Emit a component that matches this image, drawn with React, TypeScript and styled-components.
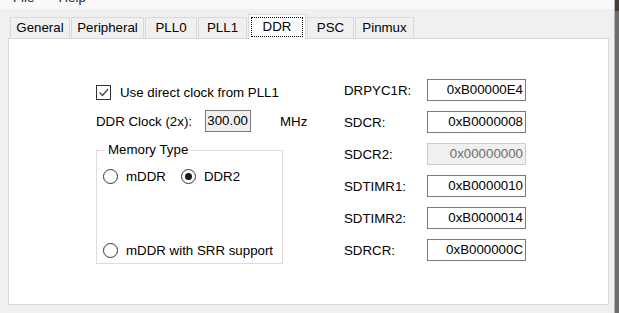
import styled, { createGlobalStyle } from 'styled-components';

const GlobalStyle = createGlobalStyle`
  html, body {
    margin: 0;
    padding: 0;
    background: #f0f0f0;
  }
  body {
    font-family: 'Liberation Sans', Arial, sans-serif;
    font-size: 13.3px;
    color: #000;
  }
`;

const Window = styled.div`
  display: flex;
  width: 619px;
  height: 313px;
  overflow: hidden;
  background: #f0f0f0;
`;

const Main = styled.div`
  width: 614px;
  display: flex;
  flex-direction: column;
`;

const Edge = styled.div`
  width: 5px;
  border-left: 1px solid #b4b4b4;
  box-sizing: border-box;
  background: linear-gradient(#4b3d33 0, #4b3d33 11px, #6f6c6a 11px, #6f6c6a 100%);
`;

const MenuBar = styled.div`
  height: 9px;
  background: #f9f9f9;
  overflow: hidden;
  display: flex;
  gap: 24px;
  padding-left: 13px;
`;

const MenuItem = styled.span`
  display: block;
  margin-top: -10px;
  line-height: 16px;
  color: #2a2233;
`;

const TabStrip = styled.div`
  display: flex;
  align-items: flex-start;
  gap: 1px;
  height: 24px;
  margin-top: 5px;
  padding-left: 10px;
`;

const Tab = styled.div<{ $active?: boolean; $w: number }>`
  box-sizing: border-box;
  width: ${(p) => p.$w}px;
  height: ${(p) => (p.$active ? 25 : 21)}px;
  margin-top: ${(p) => (p.$active ? 0 : 3)}px;
  border: 1px solid #d9d9d9;
  border-bottom: none;
  background: ${(p) => (p.$active ? '#ffffff' : '#f0f0f0')};
  position: relative;
  z-index: ${(p) => (p.$active ? 1 : 0)};
  padding-top: 2px;
  text-align: center;
  line-height: 16px;
  white-space: nowrap;
`;

const FocusBox = styled.span`
  display: block;
  box-sizing: border-box;
  height: 20px;
  margin: 0 2px;
  border: 1px dotted #000;
  line-height: 17px;
`;

const Panel = styled.div`
  box-sizing: border-box;
  width: 601px;
  height: 267px;
  margin-left: 8px;
  border: 1px solid #d9d9d9;
  background: #ffffff;
  padding: 40px 0 0 87px;
  display: flex;
`;

const LeftColumn = styled.div`
  width: 187px;
  flex-shrink: 0;
  margin-right: 61px;
  padding-top: 2px;
  display: flex;
  flex-direction: column;
`;

const Row = styled.div<{ $gap?: number }>`
  display: flex;
  align-items: center;
  height: 22px;
  gap: ${(p) => p.$gap ?? 0}px;
  white-space: nowrap;
`;

const ClockRow = styled(Row)`
  margin-top: 7px;
`;

const CheckBox = styled.span`
  box-sizing: border-box;
  flex-shrink: 0;
  width: 15px;
  height: 15px;
  border: 1px solid #333;
  background: #fff;
  display: flex;
  align-items: center;
  justify-content: center;
`;

const Label = styled.span<{ $w?: number }>`
  display: inline-block;
  flex-shrink: 0;
  width: ${(p) => (p.$w ? `${p.$w}px` : 'auto')};
`;

const Field = styled.div<{ $w: number; $disabled?: boolean; $readOnly?: boolean }>`
  box-sizing: border-box;
  flex-shrink: 0;
  width: ${(p) => p.$w}px;
  height: 22px;
  border: 1px solid ${(p) => (p.$disabled ? '#cccccc' : '#7a7a7a')};
  background: ${(p) => (p.$disabled || p.$readOnly ? '#f0f0f0' : '#ffffff')};
  color: ${(p) => (p.$disabled ? '#6d6d6d' : '#000')};
  text-align: right;
  padding-right: 2px;
  line-height: 20px;
`;

const Unit = styled.span`
  flex-shrink: 0;
  margin-left: 29px;
`;

const GroupBox = styled.fieldset`
  box-sizing: border-box;
  width: 187px;
  margin: 10px 0 0;
  padding: 10px 6px 5px;
  border: 1px solid #dcdcdc;
  min-width: 0;
`;

const Legend = styled.legend`
  padding: 0 3px;
  margin-left: 2px;
  line-height: 16px;
`;

const Options = styled.div`
  height: 90px;
  display: flex;
  flex-direction: column;
  justify-content: space-between;
`;

const RadioLine = styled.div`
  display: flex;
  align-items: center;
  height: 16px;
  gap: 15px;
`;

const RadioOption = styled.label`
  display: flex;
  align-items: center;
  gap: 8px;
  white-space: nowrap;
`;

const RadioCircle = styled.span<{ $checked?: boolean }>`
  box-sizing: border-box;
  flex-shrink: 0;
  width: 15px;
  height: 15px;
  border-radius: 50%;
  border: 1px solid #333;
  background: #fff;
  display: flex;
  align-items: center;
  justify-content: center;

  &::after {
    content: '';
    display: ${(p) => (p.$checked ? 'block' : 'none')};
    width: 7px;
    height: 7px;
    border-radius: 50%;
    background: #1a1a1a;
  }
`;

const RightColumn = styled.div`
  display: flex;
  flex-direction: column;
  gap: 10px;
`;

const tabs = [
  { name: 'General', w: 60 },
  { name: 'Peripheral', w: 73 },
  { name: 'PLL0', w: 52 },
  { name: 'PLL1', w: 49 },
  { name: 'DDR', w: 58, active: true },
  { name: 'PSC', w: 47 },
  { name: 'Pinmux', w: 59 },
];

const registers = [
  { name: 'DRPYC1R:', value: '0xB00000E4' },
  { name: 'SDCR:', value: '0xB0000008' },
  { name: 'SDCR2:', value: '0x00000000', disabled: true },
  { name: 'SDTIMR1:', value: '0xB0000010' },
  { name: 'SDTIMR2:', value: '0xB0000014' },
  { name: 'SDRCR:', value: '0xB000000C' },
];

const Radio = ({ label, checked }: { label: string; checked?: boolean }) => (
  <RadioOption>
    <RadioCircle $checked={checked} />
    {label}
  </RadioOption>
);

const App = () => {
  return (
    <>
      <GlobalStyle />
      <Window>
        <Main>
          <MenuBar>
            <MenuItem>File</MenuItem>
            <MenuItem>Help</MenuItem>
          </MenuBar>
          <TabStrip>
            {tabs.map((t) => (
              <Tab key={t.name} $w={t.w} $active={t.active}>
                {t.active ? <FocusBox>{t.name}</FocusBox> : t.name}
              </Tab>
            ))}
          </TabStrip>
          <Panel>
            <LeftColumn>
              <Row $gap={9}>
                <CheckBox>
                  <svg width="13" height="13" viewBox="0 0 13 13">
                    <polyline points="2.5,6.5 5.5,9.5 11,3" fill="none" stroke="#444" strokeWidth="1.2" />
                  </svg>
                </CheckBox>
                Use direct clock from PLL1
              </Row>
              <ClockRow>
                <Label $w={109}>DDR Clock (2x):</Label>
                <Field $w={46} $readOnly>300.00</Field>
                <Unit>MHz</Unit>
              </ClockRow>
              <GroupBox>
                <Legend>Memory Type</Legend>
                <Options>
                  <RadioLine>
                    <Radio label="mDDR" />
                    <Radio label="DDR2" checked />
                  </RadioLine>
                  <RadioLine>
                    <Radio label="mDDR with SRR support" />
                  </RadioLine>
                </Options>
              </GroupBox>
            </LeftColumn>
            <RightColumn>
              {registers.map((r) => (
                <Row key={r.name}>
                  <Label $w={83}>{r.name}</Label>
                  <Field $w={99} $disabled={r.disabled}>{r.value}</Field>
                </Row>
              ))}
            </RightColumn>
          </Panel>
        </Main>
        <Edge />
      </Window>
    </>
  );
};

export default App;
